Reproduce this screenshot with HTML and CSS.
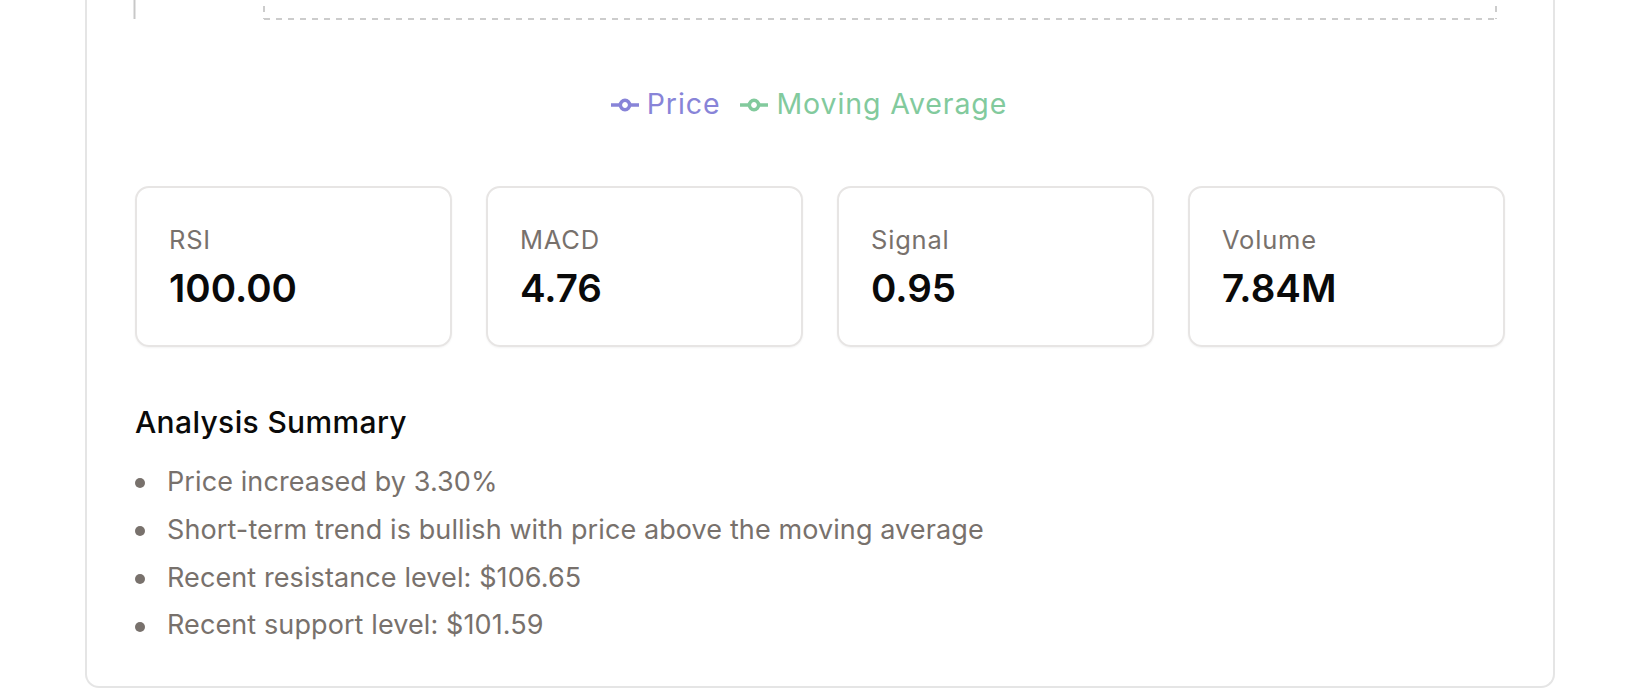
FILE: index.html
```html
<!DOCTYPE html>
<html lang="en">
<head>
<meta charset="utf-8">
<title>Technical Analysis</title>
<link rel="stylesheet" href="styles.css">
</head>
<body>
<div class="page">
  <section class="panel">
    <div class="chart-tail">
      <svg class="chart-svg" width="1370" height="20" viewBox="0 0 1370 20">
        <line x1="-0.5" y1="0" x2="-0.5" y2="19" stroke="#c8c8c8" stroke-width="2"/>
        <line x1="129" y1="19" x2="1361" y2="19" stroke="#cccccc" stroke-width="2" stroke-dasharray="6 6"/>
        <line x1="129" y1="-6" x2="129" y2="19" stroke="#cccccc" stroke-width="2" stroke-dasharray="6 6"/>
        <line x1="1361" y1="-6" x2="1361" y2="19" stroke="#cccccc" stroke-width="2" stroke-dasharray="6 6"/>
      </svg>
    </div>

    <ul class="legend">
      <li class="legend-item legend-price">
        <svg class="legend-icon" width="28" height="28" viewBox="0 0 32 32"><path fill="none" stroke="#8884d8" stroke-width="4" d="M0,16h10.67A5.33,5.33,0,1,1,21.33,16H32M21.33,16A5.33,5.33,0,1,1,10.67,16"/></svg>
        <span>Price</span>
      </li>
      <li class="legend-item legend-ma">
        <svg class="legend-icon" width="28" height="28" viewBox="0 0 32 32"><path fill="none" stroke="#82ca9d" stroke-width="4" d="M0,16h10.67A5.33,5.33,0,1,1,21.33,16H32M21.33,16A5.33,5.33,0,1,1,10.67,16"/></svg>
        <span>Moving Average</span>
      </li>
    </ul>

    <div class="metrics">
      <div class="metric">
        <div class="metric-label">RSI</div>
        <div class="metric-value">100.00</div>
      </div>
      <div class="metric">
        <div class="metric-label">MACD</div>
        <div class="metric-value">4.76</div>
      </div>
      <div class="metric">
        <div class="metric-label">Signal</div>
        <div class="metric-value">0.95</div>
      </div>
      <div class="metric">
        <div class="metric-label">Volume</div>
        <div class="metric-value">7.84M</div>
      </div>
    </div>

    <h3 class="summary-title">Analysis Summary</h3>
    <ul class="summary-list">
      <li>Price increased by 3.30%</li>
      <li>Short-term trend is bullish with price above the moving average</li>
      <li>Recent resistance level: $106.65</li>
      <li>Recent support level: $101.59</li>
    </ul>
  </section>
</div>
</body>
</html>
```

FILE: styles.css
```css
* { box-sizing: border-box; }

html, body {
  margin: 0;
  padding: 0;
  background: #ffffff;
  font-family: Inter, "Noto Sans", "Liberation Sans", sans-serif;
}

body {
  height: 689px;
  overflow: hidden;
}

.page {
  padding-left: 85px;
  width: 1555px;
}

.panel {
  width: 1470px;
  border: 2px solid #e5e5e5;
  border-top: none;
  border-radius: 0 0 14px 14px;
  padding: 0 48px 37px;
}

.chart-tail {
  height: 20px;
}

.chart-svg {
  display: block;
  overflow: visible;
}

.legend {
  list-style: none;
  margin: 64px 0 0;
  padding: 0 22px 0 0;
  display: flex;
  justify-content: center;
  gap: 20px;
  font-size: 28.5px;
  letter-spacing: 0.9px;
  line-height: 40px;
}

.legend-item {
  display: flex;
  align-items: center;
  gap: 8px;
}

.legend-icon {
  display: block;
  margin-top: 2px;
}

.legend-price { color: #8884d8; }
.legend-ma { color: #82ca9d; }

.metrics {
  margin-top: 62px;
  display: grid;
  grid-template-columns: repeat(4, 1fr);
  gap: 34px;
}

.metric {
  height: 161px;
  border: 2px solid #e7e5e4;
  border-radius: 14px;
  box-shadow: 0 1px 2px rgba(0, 0, 0, 0.05);
  padding: 36px 32px 0;
}

.metric-label {
  color: #78716c;
  font-size: 25.5px;
  letter-spacing: 0.8px;
  line-height: 32px;
}

.metric-value {
  color: #0a0a0a;
  font-size: 38.5px;
  font-weight: 600;
  line-height: 48px;
  margin-top: 8px;
}

.summary-title {
  margin: 55px 0 0;
  font-size: 30px;
  font-weight: 500;
  letter-spacing: 0.35px;
  line-height: 40px;
  color: #0a0a0a;
}

.summary-list {
  list-style: none;
  margin: 16px 0 0;
  padding: 0;
  color: #78716c;
  font-size: 27px;
  letter-spacing: 0.1px;
  line-height: 47.8px;
}

.summary-list li {
  display: flex;
  align-items: center;
}

.summary-list li::before {
  content: "";
  flex: none;
  width: 10px;
  height: 10px;
  border-radius: 50%;
  background: #78716c;
  margin: 3px 22px 0 0;
}
```
